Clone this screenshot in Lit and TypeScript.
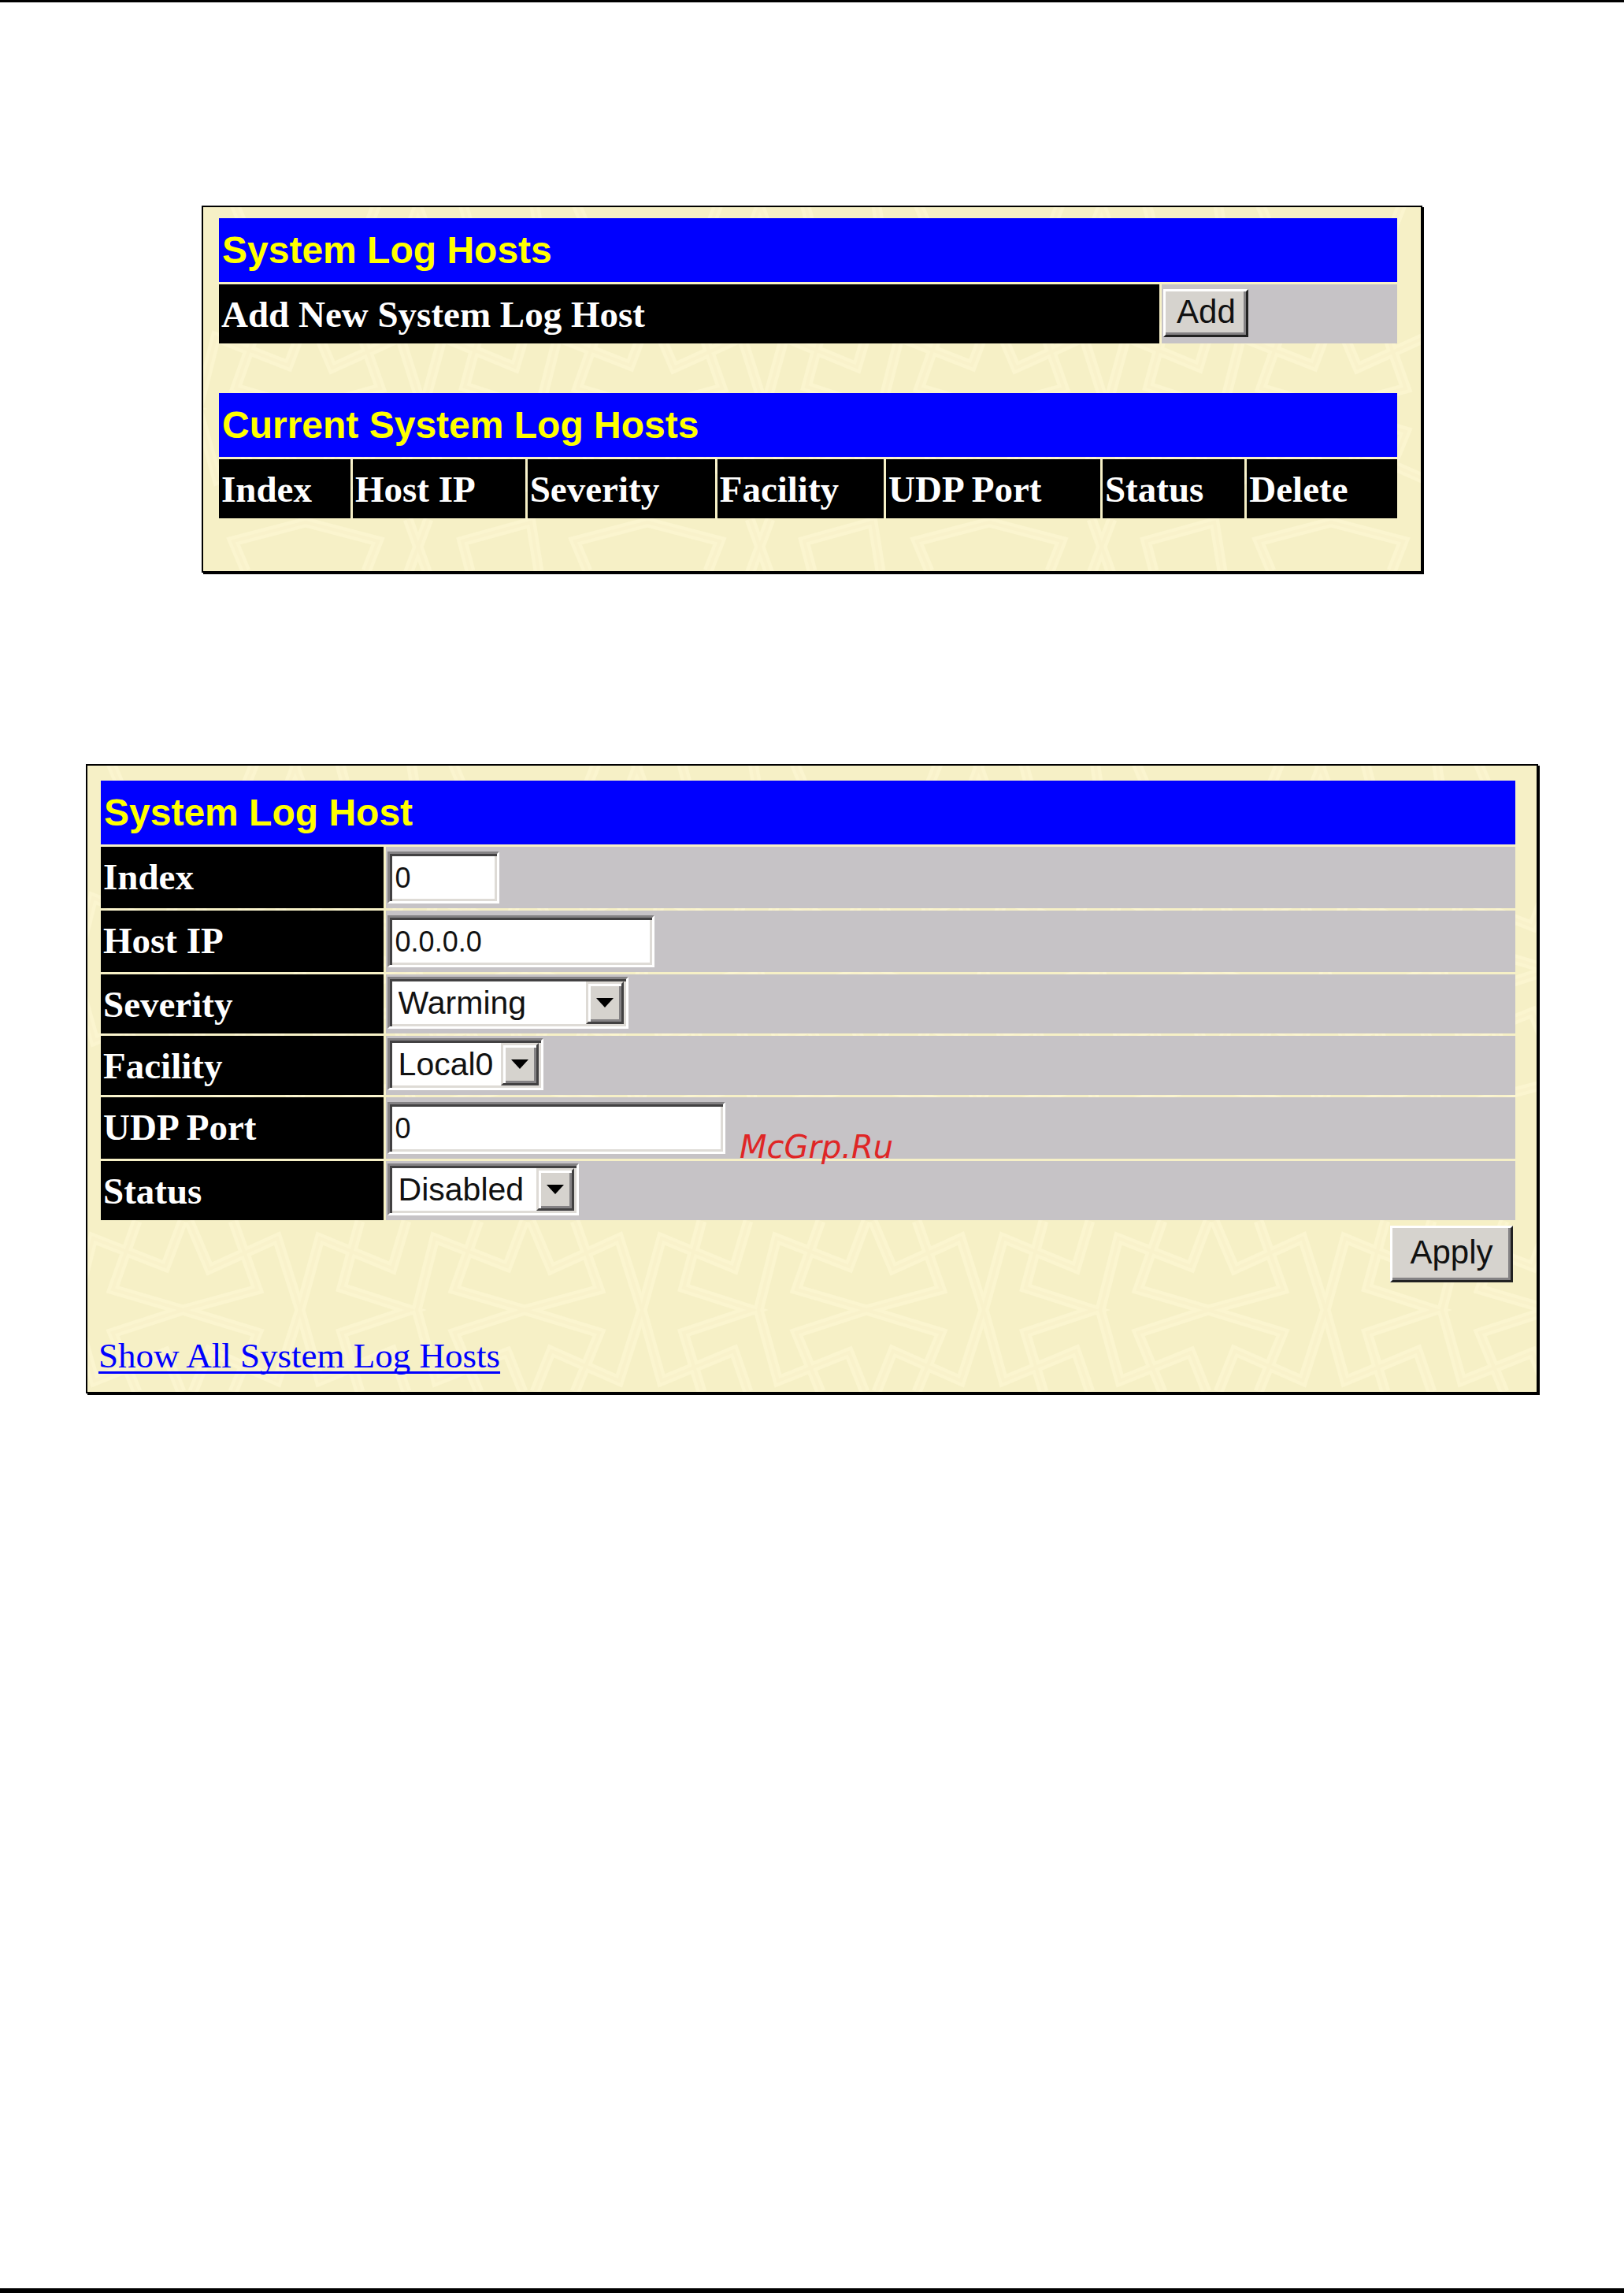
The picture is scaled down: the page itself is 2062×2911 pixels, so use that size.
import { LitElement, html, css, svg, unsafeCSS } from "lit";
import { customElement } from "lit/decorators.js";

/* Background weave: one repeatable tile of interlaced double lines. */
const WEAVE_LINES = [
  "M342 110L311 197L400 223L495 197L464 110",
  "M342 327L311 252L400 223L495 252L464 327",
  "M408 110L434 171L520 132L549 223L520 313L434 275L413 327",
  "M400 110L378 168L286 132L263 223L288 313L378 277L398 327",
  "M250 110L232 170L140 132L115 223L140 313L232 275L250 327",
  "M191 110L168 195L255 223L168 252L191 327",
  "M324 429L308 391L400 367L492 391L477 429",
  "M530 363L555 432M556 363L530 432",
  "M175 429L165 391L252 367L262 429",
].join("");

const weaveTile = (() => {
  const lines = [0, -434]
    .map((x) => `<use href='#w' x='${x}'/>`)
    .join("");
  const source =
    `<svg xmlns='http://www.w3.org/2000/svg' width='434' height='432'>` +
    `<defs><path id='w' d='${WEAVE_LINES}'/></defs>` +
    `<rect width='434' height='432' fill='#f6f0c6'/>` +
    `<g fill='none' stroke='#fbf5cf' stroke-width='13'>${lines}</g>` +
    `<g fill='none' stroke='#f9f2cb' stroke-width='4'>${lines}</g></svg>`;
  return unsafeCSS(`url("data:image/svg+xml,${encodeURIComponent(source).replace(/'/g, "%27")}")`);
})();

interface Field {
  id: string;
  label: string;
  kind: "text" | "select";
  value: string;
}

const FIELDS: Field[] = [
  { id: "index", label: "Index", kind: "text", value: "0" },
  { id: "host-ip", label: "Host IP", kind: "text", value: "0.0.0.0" },
  { id: "severity", label: "Severity", kind: "select", value: "Warming" },
  { id: "facility", label: "Facility", kind: "select", value: "Local0" },
  { id: "udp-port", label: "UDP Port", kind: "text", value: "0" },
  { id: "status", label: "Status", kind: "select", value: "Disabled" },
];

const HOST_COLUMNS = ["Index", "Host IP", "Severity", "Facility", "UDP Port", "Status", "Delete"];

@customElement("app-root")
export class AppRoot extends LitElement {
  static styles = css`
    :host {
      display: block;
      box-sizing: border-box;
      min-height: 100vh;
      border-top: 3px solid #000;
      border-bottom: 6px solid #000;
      background: #fff;
      font-family: "Liberation Serif", serif;
      color: #000;
    }
    * {
      box-sizing: border-box;
    }
    .page {
      display: flex;
      flex-direction: column;
      gap: 243px;
      padding-top: 258px;
    }
    .panel {
      position: relative;
      border: 2px solid #000;
      box-shadow: 2px 2px 0 #000;
      background-color: #f6f0c6;
      background-image: ${weaveTile};
    }
    .hosts {
      margin: 0 256px;
      padding: 11px 27px 64px 17px;
      background-position: 164px 33px;
    }
    .host {
      margin: 0 109px;
      padding: 16px 24px 16px 14px;
      background-position: 155px 36px;
    }
    table {
      width: 100%;
      table-layout: fixed;
      border-collapse: separate;
      border-spacing: 3px;
    }
    .current {
      margin-top: 57px;
    }
    th,
    td {
      padding: 0;
      text-align: left;
      vertical-align: top;
    }
    .title {
      padding: 0 4px;
      background: #00f;
      color: #ff0;
      font: bold 48px/81px "Liberation Sans", sans-serif;
    }
    .name {
      padding: 2px 3px 0;
      background: #000;
      color: #fff;
      font-size: 47px;
      font-weight: bold;
      line-height: 73px;
      white-space: nowrap;
    }
    .value {
      padding: 6px 2px;
      background: #c6c3c6;
      font-size: 0;
    }
    .value.pick {
      padding: 3px 2px 6px;
    }
    .c-main { width: 80%; }
    .c-index { width: 11.3%; }
    .c-ip { width: 14.8%; }
    .c-severity { width: 16.1%; }
    .c-facility { width: 14.3%; }
    .c-port { width: 18.4%; }
    .c-status { width: 12.2%; }
    .c-label { width: 20%; }

    input,
    select,
    button {
      margin: 0;
      border-radius: 0;
      appearance: none;
      outline-offset: -10px;
      font-family: "Liberation Sans", sans-serif;
      color: #111;
    }
    input,
    select {
      display: block;
      height: 66px;
      border: 3px solid;
      border-color: #848284 #fff #fff #848284;
      background: #fff;
      box-shadow: inset 3px 3px 0 #424142, inset -3px -3px 0 #dedbd6;
    }
    input {
      padding: 4px 7px 2px;
      font-size: 36px;
    }
    select {
      width: 100%;
      padding: 0 54px 0 11px;
      font-size: 41px;
    }
    .w-index { width: 142px; }
    .w-host-ip { width: 339px; }
    .w-severity { width: 306px; }
    .w-facility { width: 198px; }
    .w-udp-port { width: 429px; }
    .w-status { width: 243px; }

    .combo {
      display: grid;
    }
    .combo > * {
      grid-area: 1 / 1;
    }
    .arrow {
      display: grid;
      place-items: center;
      justify-self: end;
      align-self: center;
      width: 48px;
      height: 54px;
      margin-right: 6px;
      border: 3px solid;
      border-color: #dedbd6 #424142 #424142 #dedbd6;
      background: #d6d3ce;
      box-shadow: inset 3px 3px 0 #fff, inset -3px -3px 0 #848284;
      pointer-events: none;
    }
    .arrow svg {
      display: block;
    }
    button {
      display: block;
      border: 3px solid;
      border-color: #fff #222 #222 #fff;
      background: #d6d3ce;
      box-shadow: inset -3px -3px 0 #848284;
      padding: 0 0 4px;
      font-size: 42px;
      line-height: 48px;
      text-align: center;
    }
    .add {
      width: 108px;
      height: 61px;
    }
    .apply {
      width: 156px;
      height: 72px;
    }
    .actions {
      display: flex;
      justify-content: flex-end;
      padding: 4px 6px 0 0;
    }
    .footer {
      margin-top: 63px;
      font-size: 45px;
      line-height: 60px;
    }
    a {
      color: #00f;
      text-decoration: underline;
      text-decoration-thickness: 3px;
      text-decoration-skip-ink: none;
      text-underline-offset: 5px;
    }
    .mark {
      position: absolute;
      left: 828px;
      top: 460px;
      color: #df2626;
      font: italic 40px/48px "DejaVu Sans", sans-serif;
      pointer-events: none;
    }
  `;

  private control(f: Field) {
    if (f.kind === "text") {
      return html`<td class="value">
        <input id=${f.id} class="w-${f.id}" type="text" .value=${f.value} />
      </td>`;
    }
    return html`<td class="value pick">
      <div class="combo w-${f.id}">
        <select id=${f.id}>
          <option>${f.value}</option>
        </select>
        <span class="arrow" aria-hidden="true">
          <svg width="22" height="12" viewBox="0 0 22 12">${svg`<path d="M0 0H22L11 12Z"/>`}</svg>
        </span>
      </div>
    </td>`;
  }

  render() {
    return html`
      <main class="page">
        <section class="panel hosts" id="hosts">
          <table>
            <colgroup><col class="c-main" /><col /></colgroup>
            <tbody>
              <tr><th class="title" colspan="2">System Log Hosts</th></tr>
              <tr>
                <th class="name" scope="row">Add New System Log Host</th>
                <td class="value"><button class="add" type="button">Add</button></td>
              </tr>
            </tbody>
          </table>
          <table class="current">
            <colgroup>
              <col class="c-index" /><col class="c-ip" /><col class="c-severity" /><col class="c-facility" />
              <col class="c-port" /><col class="c-status" /><col />
            </colgroup>
            <thead>
              <tr><th class="title" colspan="7">Current System Log Hosts</th></tr>
              <tr>${HOST_COLUMNS.map((c) => html`<th class="name" scope="col">${c}</th>`)}</tr>
            </thead>
          </table>
        </section>

        <form class="panel host" @submit=${(e: Event) => e.preventDefault()}>
          <table>
            <colgroup><col class="c-label" /><col /></colgroup>
            <tbody>
              <tr><th class="title" colspan="2">System Log Host</th></tr>
              ${FIELDS.map(
                (f) => html`<tr>
                  <th class="name" scope="row"><label for=${f.id}>${f.label}</label></th>
                  ${this.control(f)}
                </tr>`
              )}
            </tbody>
          </table>
          <div class="actions"><button class="apply" type="submit">Apply</button></div>
          <div class="footer"><a href="#hosts">Show All System Log Hosts</a></div>
          <span class="mark">McGrp.Ru</span>
        </form>
      </main>
    `;
  }
}
